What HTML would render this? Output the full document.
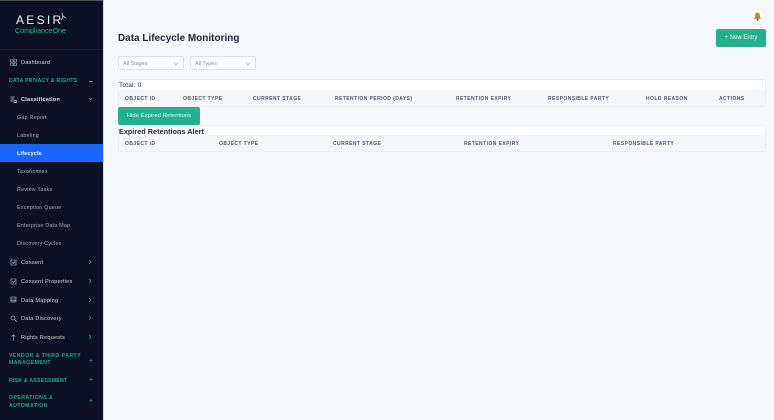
<!DOCTYPE html>
<html><head><meta charset="utf-8"><style>
html,body{margin:0;padding:0;width:774px;height:420px;overflow:hidden;background:#f7f8fb;font-family:"Liberation Sans",sans-serif}
.a{position:absolute;white-space:nowrap}
#side{position:absolute;left:0;top:0;width:103px;height:420px;background:#0b1122;overflow:hidden}
.n{position:absolute;white-space:nowrap;font-size:5.4px;letter-spacing:.2px;color:#c9ccd3;line-height:8px}
.s{left:17px;color:#a9adb6}
.m{left:21px;color:#d6d8de;font-size:5.6px}
.h{position:absolute;left:9px;white-space:nowrap;font-size:5.2px;font-weight:bold;letter-spacing:.22px;color:#22a88c;line-height:7.5px}
.h2{letter-spacing:.42px}
.c{position:absolute;left:88px;width:4px;height:6px}
.ic{position:absolute;left:10px;width:7px;height:7px}
.th{position:absolute;font-size:5px;font-weight:bold;letter-spacing:.43px;color:#50546a;white-space:nowrap;line-height:7px}
.card{position:absolute;left:118px;width:648px;background:#fff;border:1px solid #eceef1;box-sizing:border-box;border-radius:3px}
.band{position:absolute;left:119px;width:646px;background:#f6f7fb}
.sel{position:absolute;top:56px;width:66px;height:14px;box-sizing:border-box;background:#fff;border:1px solid #dfe1e6;border-radius:2px;font-size:5.4px;line-height:14px;color:#8a8f99;padding-left:4px}
.btn{position:absolute;background:#24b08f;color:#eafaf5;border-radius:2px;text-align:center;font-size:5.6px}
</style></head><body>
<div class="a" style="left:103px;top:0;width:1px;height:420px;background:#d3d5da"></div>
<div id="side">
<div class="a" style="left:0;top:0;width:103px;height:1px;background:#50535b"></div>
<div class="a" style="left:16px;top:13px;font-size:12px;letter-spacing:2.3px;color:#f2f3f5;line-height:15px">AESIR</div>
<svg class="a" style="left:60px;top:12px" width="7" height="10" viewBox="0 0 7 10"><path d="M2 1 3 5 1 8M3 4 6 6" stroke="#c9ccd3" fill="none" stroke-width="1"/></svg>
<div class="a" style="left:15px;top:27px;font-size:7.1px;color:#25b594;line-height:9px">ComplianceOne</div>
<div class="a" style="left:0;top:49px;width:103px;height:1px;background:#171d2e"></div>

<svg class="ic" style="top:59px" viewBox="0 0 7 7"><path d="M.5.5h2.500v2.500H.5zM4 .5h2.500v2.500H4zM.5 4h2.500v2.500H.5zM4 4h2.500v2.500H4z" fill="none" stroke="#b9bcc4" stroke-width=".6"/></svg>
<div class="n m" style="top:59px">Dashboard</div>
<div class="h" style="top:78px">DATA PRIVACY &amp; RIGHTS</div>
<div class="a" style="left:89px;top:81px;width:4px;height:1px;background:#25b594"></div>
<svg class="ic" style="top:96px" viewBox="0 0 7 7"><path d="M.5 1h4M.5 3h4M.5 5h2.500M4 4.500h2.500v2H4z" fill="none" stroke="#c9ccd3" stroke-width=".7"/></svg>
<div class="n m" style="top:96px;font-weight:bold;color:#dfe1e6">Classification</div>
<svg class="c" style="top:96px;left:88px;width:5px" viewBox="0 0 5 6"><path d="M.8 2 2.500 3.700 4.200 2" fill="none" stroke="#25b594" stroke-width=".7"/></svg>
<div class="n s" style="top:114px">Gap Report</div>
<div class="n s" style="top:132px">Labeling</div>
<div class="a" style="left:0;top:144px;width:103px;height:18px;background:#1a66fb"></div>
<div class="n s" style="top:150px;color:#fff;font-weight:bold">Lifecycle</div>
<div class="n s" style="top:168px">Taxonomies</div>
<div class="n s" style="top:186px">Review Tasks</div>
<div class="n s" style="top:204px">Exception Queue</div>
<div class="n s" style="top:222px">Enterprise Data Map</div>
<div class="n s" style="top:240px">Discovery Cycles</div>

<svg class="ic" style="top:259px" viewBox="0 0 7 7"><path d="M1 1h5v5H1zM2.200 3.500l1 1 2-2" fill="none" stroke="#c9ccd3" stroke-width=".6"/></svg>
<div class="n m" style="top:259px">Consent</div>
<svg class="c" style="top:259px" viewBox="0 0 4 6"><path d="M1.200 1 3 3 1.200 5" fill="none" stroke="#25b594" stroke-width=".7"/></svg>
<svg class="ic" style="top:278px" viewBox="0 0 7 7"><path d="M1 1h5v5H1zM2.200 3.500l1 1 2-2" fill="none" stroke="#c9ccd3" stroke-width=".6"/></svg>
<div class="n m" style="top:278px">Consent Properties</div>
<svg class="c" style="top:278px" viewBox="0 0 4 6"><path d="M1.200 1 3 3 1.200 5" fill="none" stroke="#25b594" stroke-width=".7"/></svg>
<svg class="ic" style="top:296px" viewBox="0 0 7 7"><path d="M1 1h5v5H1zM1 3h5M1 4.800h5" fill="none" stroke="#c9ccd3" stroke-width=".6"/></svg>
<div class="n m" style="top:297px">Data Mapping</div>
<svg class="c" style="top:297px" viewBox="0 0 4 6"><path d="M1.200 1 3 3 1.200 5" fill="none" stroke="#25b594" stroke-width=".7"/></svg>
<svg class="ic" style="top:315px" viewBox="0 0 7 7"><circle cx="3" cy="3" r="2" fill="none" stroke="#c9ccd3" stroke-width=".6"/><path d="M4.500 4.500 6.500 6.500" stroke="#c9ccd3" stroke-width=".6"/></svg>
<div class="n m" style="top:315px">Data Discovery</div>
<svg class="c" style="top:315px" viewBox="0 0 4 6"><path d="M1.200 1 3 3 1.200 5" fill="none" stroke="#25b594" stroke-width=".7"/></svg>
<svg class="ic" style="top:334px" viewBox="0 0 7 7"><path d="M3.500 7V.8M1.800 2.500 3.500.8 5.200 2.500" fill="none" stroke="#c9ccd3" stroke-width=".6"/></svg>
<div class="n m" style="top:334px">Rights Requests</div>
<svg class="c" style="top:334px" viewBox="0 0 4 6"><path d="M1.200 1 3 3 1.200 5" fill="none" stroke="#25b594" stroke-width=".7"/></svg>

<div class="h h2" style="top:352.500px">VENDOR &amp; THIRD-PARTY<br>MANAGEMENT</div>
<div class="a" style="left:89px;top:358px;font-size:7px;line-height:7px;color:#25b594">+</div>
<div class="h" style="top:378px">RISK &amp; ASSESSMENT</div>
<div class="a" style="left:89px;top:377px;font-size:7px;line-height:7px;color:#25b594">+</div>
<div class="h h2" style="top:395px">OPERATIONS &amp;<br>AUTOMATION</div>
<div class="a" style="left:89px;top:398px;font-size:7px;line-height:7px;color:#25b594">+</div>
</div>

<div class="a" style="left:749px;top:8px;width:17px;height:17px;border-radius:50%;background:#fff;border:1px solid #eef0f3;box-sizing:border-box"></div>
<svg class="a" style="left:753px;top:12px" width="9" height="9" viewBox="0 0 8 8"><path d="M4 .5C2.500 .5 2 1.800 2 3c0 1.500-.8 2.300-1.200 3h6.400C6.800 5.300 6 4.500 6 3 6 1.800 5.500 .5 4 .5z" fill="#b58a26"/><circle cx="4" cy="6.900" r=".9" fill="#6d5a2a"/></svg>

<div class="a" style="left:118px;top:32px;font-size:9.900px;font-weight:bold;letter-spacing:.05px;color:#1b2030;line-height:13px">Data Lifecycle Monitoring</div>
<div class="btn" style="left:716px;top:29px;width:50px;height:18px;line-height:18px;font-size:6px">+ New Entry</div>

<div class="sel" style="left:118px">All Stages<svg class="a" style="left:54px;top:5px" width="6" height="4" viewBox="0 0 6 4"><path d="M.8 .8 3 3 5.200 .8" fill="none" stroke="#a5a9b1" stroke-width=".7"/></svg></div>
<div class="sel" style="left:190px">All Types<svg class="a" style="left:54px;top:5px" width="6" height="4" viewBox="0 0 6 4"><path d="M.8 .8 3 3 5.200 .8" fill="none" stroke="#a5a9b1" stroke-width=".7"/></svg></div>

<div class="card" style="top:79px;height:28px"></div>
<div class="band" style="top:90px;height:16px"></div>
<div class="a" style="left:119px;top:81.500px;font-size:6.600px;letter-spacing:.15px;color:#2a2e3a;line-height:8px">Total: 0</div>
<div class="th" style="left:125px;top:95.500px">OBJECT ID</div>
<div class="th" style="left:183px;top:95.500px">OBJECT TYPE</div>
<div class="th" style="left:253px;top:95.500px">CURRENT STAGE</div>
<div class="th" style="left:335px;top:95.500px">RETENTION PERIOD (DAYS)</div>
<div class="th" style="left:456px;top:95.500px">RETENTION EXPIRY</div>
<div class="th" style="left:548px;top:95.500px">RESPONSIBLE PARTY</div>
<div class="th" style="left:646px;top:95.500px">HOLD REASON</div>
<div class="th" style="left:719px;top:95.500px">ACTIONS</div>

<div class="card" style="top:125px;height:27px"></div>
<div class="band" style="top:135px;height:16px"></div>
<div class="btn" style="left:118px;top:107px;width:82px;height:18px;line-height:19px;font-size:5.900px;letter-spacing:.04px">Hide Expired Retentions</div>
<div class="a" style="left:119px;top:126.500px;font-size:7.300px;font-weight:bold;color:#23283a;line-height:9px">Expired Retentions Alert</div>
<div class="th" style="left:125px;top:140.500px">OBJECT ID</div>
<div class="th" style="left:219px;top:140.500px">OBJECT TYPE</div>
<div class="th" style="left:333px;top:140.500px">CURRENT STAGE</div>
<div class="th" style="left:464px;top:140.500px">RETENTION EXPIRY</div>
<div class="th" style="left:613px;top:140.500px">RESPONSIBLE PARTY</div>
</body></html>
